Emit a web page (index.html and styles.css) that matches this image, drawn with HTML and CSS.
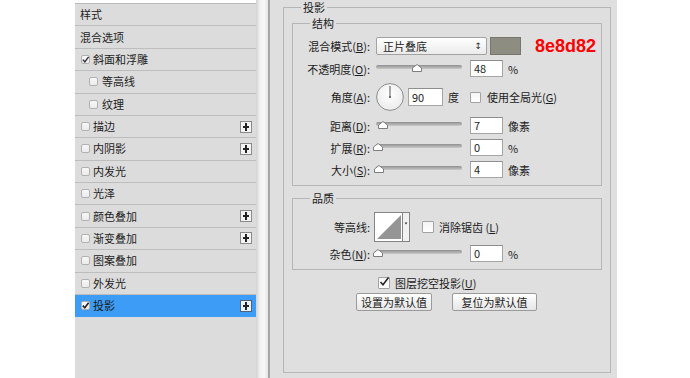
FILE: index.html
```html
<!DOCTYPE html>
<html lang="zh-CN">
<head>
<meta charset="utf-8">
<title>图层样式 - 投影</title>
<link rel="stylesheet" href="styles.css">
</head>
<body>
<div class="dialog">
  <div class="styles-panel">
    <div class="srow">样式</div>
    <div class="srow">混合选项</div>
    <div class="srow"><span class="cb"><svg width="9" height="9" viewBox="0 0 9 9"><path d="M1.8 4.6 L3.8 6.8 L7.6 1.8" fill="none" stroke="#333" stroke-width="1.4"/></svg></span>斜面和浮雕</div>
    <div class="srow sub"><span class="cb"></span>等高线</div>
    <div class="srow sub"><span class="cb"></span>纹理</div>
    <div class="srow"><span class="cb"></span>描边<span class="plus"></span></div>
    <div class="srow"><span class="cb"></span>内阴影<span class="plus"></span></div>
    <div class="srow"><span class="cb"></span>内发光</div>
    <div class="srow"><span class="cb"></span>光泽</div>
    <div class="srow"><span class="cb"></span>颜色叠加<span class="plus"></span></div>
    <div class="srow"><span class="cb"></span>渐变叠加<span class="plus"></span></div>
    <div class="srow"><span class="cb"></span>图案叠加</div>
    <div class="srow"><span class="cb"></span>外发光</div>
    <div class="srow selected"><span class="cb"><svg width="9" height="9" viewBox="0 0 9 9"><path d="M1.8 4.6 L3.8 6.8 L7.6 1.8" fill="none" stroke="#222" stroke-width="1.6"/></svg></span>投影<span class="plus"></span></div>
  </div>
  <div class="scroll"></div>
  <div class="edge"></div>
  <div class="main">
    <fieldset class="group outer">
      <legend>投影</legend>
      <fieldset class="group inner">
        <legend>结构</legend>
        <div class="frow r1">
          <span class="lbl">混合模式(<u>B</u>):</span>
          <span class="select">正片叠底<span class="arrows">&#x2195;</span></span>
          <span class="swatch"></span>
          <span class="hex">8e8d82</span>
        </div>
        <div class="frow r2">
          <span class="lbl">不透明度(<u>O</u>):</span>
          <span class="slider"><span class="track"></span><span class="thumb" style="left:48%"><svg width="10" height="8" viewBox="0 0 10 8"><polygon points="5,0.5 9.5,4 9.5,7.5 0.5,7.5 0.5,4" fill="#fff" stroke="#7d7d7d"/></svg></span></span>
          <span class="input">48</span>
          <span class="unit">%</span>
        </div>
        <div class="frow r3">
          <span class="lbl">角度(<u>A</u>):</span>
          <span class="dial"><svg width="28" height="28" viewBox="0 0 28 28"><defs><radialGradient id="dg" cx="50%" cy="40%" r="60%"><stop offset="0" stop-color="#ffffff"/><stop offset="1" stop-color="#ebebeb"/></radialGradient></defs><circle cx="14" cy="14" r="13.4" fill="url(#dg)" stroke="#8c8c8c"/><line x1="14" y1="14" x2="14" y2="3" stroke="#555" stroke-width="1"/><circle cx="14" cy="14" r="1.1" fill="#555"/></svg></span>
          <span class="input wide">90</span>
          <span class="unit">度</span>
          <span class="wcb global"></span>
          <span class="cbtext">使用全局光(<u>G</u>)</span>
        </div>
        <div class="frow r4">
          <span class="lbl">距离(<u>D</u>):</span>
          <span class="slider"><span class="track"></span><span class="thumb" style="left:8%"><svg width="10" height="8" viewBox="0 0 10 8"><polygon points="5,0.5 9.5,4 9.5,7.5 0.5,7.5 0.5,4" fill="#fff" stroke="#7d7d7d"/></svg></span></span>
          <span class="input">7</span>
          <span class="unit">像素</span>
        </div>
        <div class="frow r5">
          <span class="lbl">扩展(<u>R</u>):</span>
          <span class="slider"><span class="track"></span><span class="thumb" style="left:2%"><svg width="10" height="8" viewBox="0 0 10 8"><polygon points="5,0.5 9.5,4 9.5,7.5 0.5,7.5 0.5,4" fill="#fff" stroke="#7d7d7d"/></svg></span></span>
          <span class="input">0</span>
          <span class="unit">%</span>
        </div>
        <div class="frow r6">
          <span class="lbl">大小(<u>S</u>):</span>
          <span class="slider"><span class="track"></span><span class="thumb" style="left:4%"><svg width="10" height="8" viewBox="0 0 10 8"><polygon points="5,0.5 9.5,4 9.5,7.5 0.5,7.5 0.5,4" fill="#fff" stroke="#7d7d7d"/></svg></span></span>
          <span class="input">4</span>
          <span class="unit">像素</span>
        </div>
      </fieldset>
      <fieldset class="group inner quality">
        <legend>品质</legend>
        <div class="frow q1">
          <span class="lbl">等高线:</span>
          <span class="contour"><svg width="36" height="30" viewBox="0 0 36 30"><rect x="0.5" y="0.5" width="35" height="29" fill="#fff" stroke="#858585"/><polygon points="3,27 27,3 27,27" fill="#959595"/><rect x="28.5" y="0.5" width="7" height="29" fill="#f1f1f1" stroke="#858585"/><polygon points="30.5,10.5 33.5,10.5 32,12.5" fill="#333"/></svg></span>
          <span class="wcb aa"></span>
          <span class="cbtext">消除锯齿 (<u>L</u>)</span>
        </div>
        <div class="frow q2">
          <span class="lbl">杂色(<u>N</u>):</span>
          <span class="slider"><span class="track"></span><span class="thumb" style="left:2%"><svg width="10" height="8" viewBox="0 0 10 8"><polygon points="5,0.5 9.5,4 9.5,7.5 0.5,7.5 0.5,4" fill="#fff" stroke="#7d7d7d"/></svg></span></span>
          <span class="input">0</span>
          <span class="unit">%</span>
        </div>
      </fieldset>
      <div class="knockout">
        <span class="wcb checked"><svg width="12" height="12" viewBox="0 0 12 12"><path d="M2.5 6 L5 8.8 L10.5 1.5" fill="none" stroke="#222" stroke-width="1.5"/></svg></span>
        <span class="cbtext">图层挖空投影(<u>U</u>)</span>
      </div>
      <div class="buttons">
        <span class="btn b1">设置为默认值</span>
        <span class="btn b2">复位为默认值</span>
      </div>
    </fieldset>
  </div>
</div>
</body>
</html>
```

FILE: styles.css
```css
* { box-sizing: border-box; }
html, body { margin: 0; height: 100%; }
body {
  background: #ffffff;
  font-family: "Noto Sans CJK SC", "Noto Sans", sans-serif;
  font-size: 11px;
  color: #1c1c1c;
  overflow: hidden;
}
u { text-decoration: underline; text-underline-offset: 1px; }

.dialog {
  display: flex;
  margin-left: 75px;
  width: 542px;
  height: 378px;
  overflow: hidden;
}

/* left styles list */
.styles-panel {
  width: 181px;
  flex: none;
  margin-top: 3px;
  border-top: 1px solid #b9b9b9;
  background: #dcdcdc;
}
.srow {
  display: flex;
  align-items: center;
  height: 22.38px;
  border-bottom: 1px solid #bdbdbd;
  padding: 0 4px 0 5px;
  line-height: 1;
  white-space: nowrap;
}
.srow.sub { padding-left: 14px; }
.srow .cb { margin: 0 3px 0 1px; }
.srow.sub .cb { margin: 0 4px 0 0; }
.srow.selected { background: #3d9cf6; border-bottom-color: #3d9cf6; }
.cb {
  display: inline-flex;
  width: 9px;
  height: 9px;
  border: 1px solid #b1b1b1;
  border-radius: 2px;
  background: linear-gradient(#f7f7f7, #ececec);
  flex: none;
  position: relative;
}
.cb svg { position: absolute; left: -1px; top: -1px; }
.plus {
  margin-left: auto;
  width: 12px;
  height: 12px;
  border: 1px solid #8a8a8a;
  background: #f3f3f3;
  position: relative;
  flex: none;
}
.plus::before, .plus::after {
  content: "";
  position: absolute;
  background: #222;
}
.plus::before { left: 2px; right: 2px; top: 4px; height: 2px; }
.plus::after { top: 1px; bottom: 1px; left: 4px; width: 2px; }
.selected .plus { background: #e9f3fd; border-color: #50607a; }

.scroll {
  width: 12px;
  flex: none;
  background: linear-gradient(90deg, #d2d2d2, #f3f3f3 35%, #f6f6f6 70%, #e2e2e2);
}
.edge { width: 2px; flex: none; background: #a6a6a6; }

.main {
  flex: 1;
  background: #dfdfdf;
  padding: 1px 6px 0 13px;
  overflow: hidden;
}

/* group boxes */
.group {
  margin: 0;
  border: 1px solid #b6b6b6;
  min-width: 0;
}
.group > legend {
  padding: 0 2px;
  height: 13px;
  line-height: 13px;
}
.outer {
  padding: 3px 8px 0 8px;
  height: 372px;
}
.outer > legend { margin-left: 9px; }
.inner { padding: 7px 0 7px 0; }
.inner > legend { margin-left: 17px; }
.quality { margin-top: 6px; }

.frow {
  display: flex;
  align-items: center;
  height: 17px;
  white-space: nowrap;
}
.r1 { height: 18px; }
.r2 { margin-top: 5px; }
.r3 { margin-top: 6px; height: 28px; }
.r4 { margin-top: 6px; }
.r5, .r6 { margin-top: 5px; }
.q1 { height: 30px; }
.q2 { margin-top: 3px; }

.lbl {
  width: 77px;
  flex: none;
  text-align: right;
  margin-right: 6px;
}

.select {
  position: relative;
  width: 111px;
  height: 18px;
  line-height: 16px;
  border: 1px solid #a2a2a2;
  border-radius: 2px;
  background: linear-gradient(#ffffff, #ebebeb);
  padding-left: 6px;
  flex: none;
}
.arrows {
  position: absolute;
  right: 4px;
  top: 0;
  font-size: 9px;
  font-family: "DejaVu Sans", sans-serif;
  color: #333;
}
.swatch {
  width: 31px;
  height: 18px;
  margin-left: 3px;
  background: #8e8d82;
  border: 1px solid #77766d;
  flex: none;
}
.hex {
  margin-left: 14px;
  font-family: "Liberation Sans", Arial, sans-serif;
  font-weight: bold;
  font-size: 18px;
  color: #ff0000;
  line-height: 1;
}

.slider {
  position: relative;
  width: 86px;
  height: 17px;
  margin-right: 8px;
  flex: none;
}
.track {
  display: block;
  margin-top: 5px;
  height: 4px;
  border-radius: 2px;
  background: linear-gradient(#8f8f8f, #c9c9c9);
}
.thumb {
  position: absolute;
  top: 4px;
  margin-left: -5px;
  width: 10px;
  height: 8px;
  line-height: 0;
}

.input {
  width: 33px;
  height: 17px;
  line-height: 15px;
  border: 1px solid #a5a5a5;
  border-top-color: #8e8e8e;
  background: #ffffff;
  padding-left: 3px;
  flex: none;
}
.input.wide { width: 35px; height: 18px; line-height: 16px; }
.unit { margin-left: 5px; }

.dial { width: 28px; height: 28px; margin-right: 4px; line-height: 0; flex: none; }

.wcb {
  display: inline-block;
  width: 12px;
  height: 12px;
  border: 1px solid #a3a3a3;
  border-radius: 1px;
  background: linear-gradient(#f4f4f4, #ffffff);
  flex: none;
  position: relative;
}
.wcb svg { position: absolute; left: -1px; top: -2px; }
.global { margin-left: 11px; width: 11px; height: 11px; }
.cbtext { margin-left: 6px; }
.contour { line-height: 0; margin-left: -2px; flex: none; }
.aa { margin-left: 12px; }
.q1 .cbtext { margin-left: 5px; }

.knockout {
  display: flex;
  align-items: center;
  margin-top: 7px;
  height: 12px;
  padding-left: 86px;
}
.knockout .cbtext { margin-left: 5px; }

.buttons {
  display: flex;
  gap: 20px;
  margin-top: 4px;
  padding-left: 64px;
}
.btn {
  height: 18px;
  line-height: 16px;
  text-align: center;
  border: 1px solid #9a9a9a;
  border-radius: 2px;
  background: linear-gradient(#ffffff, #e6e6e6);
}
.b1 { width: 76px; }
.b2 { width: 85px; }
```
